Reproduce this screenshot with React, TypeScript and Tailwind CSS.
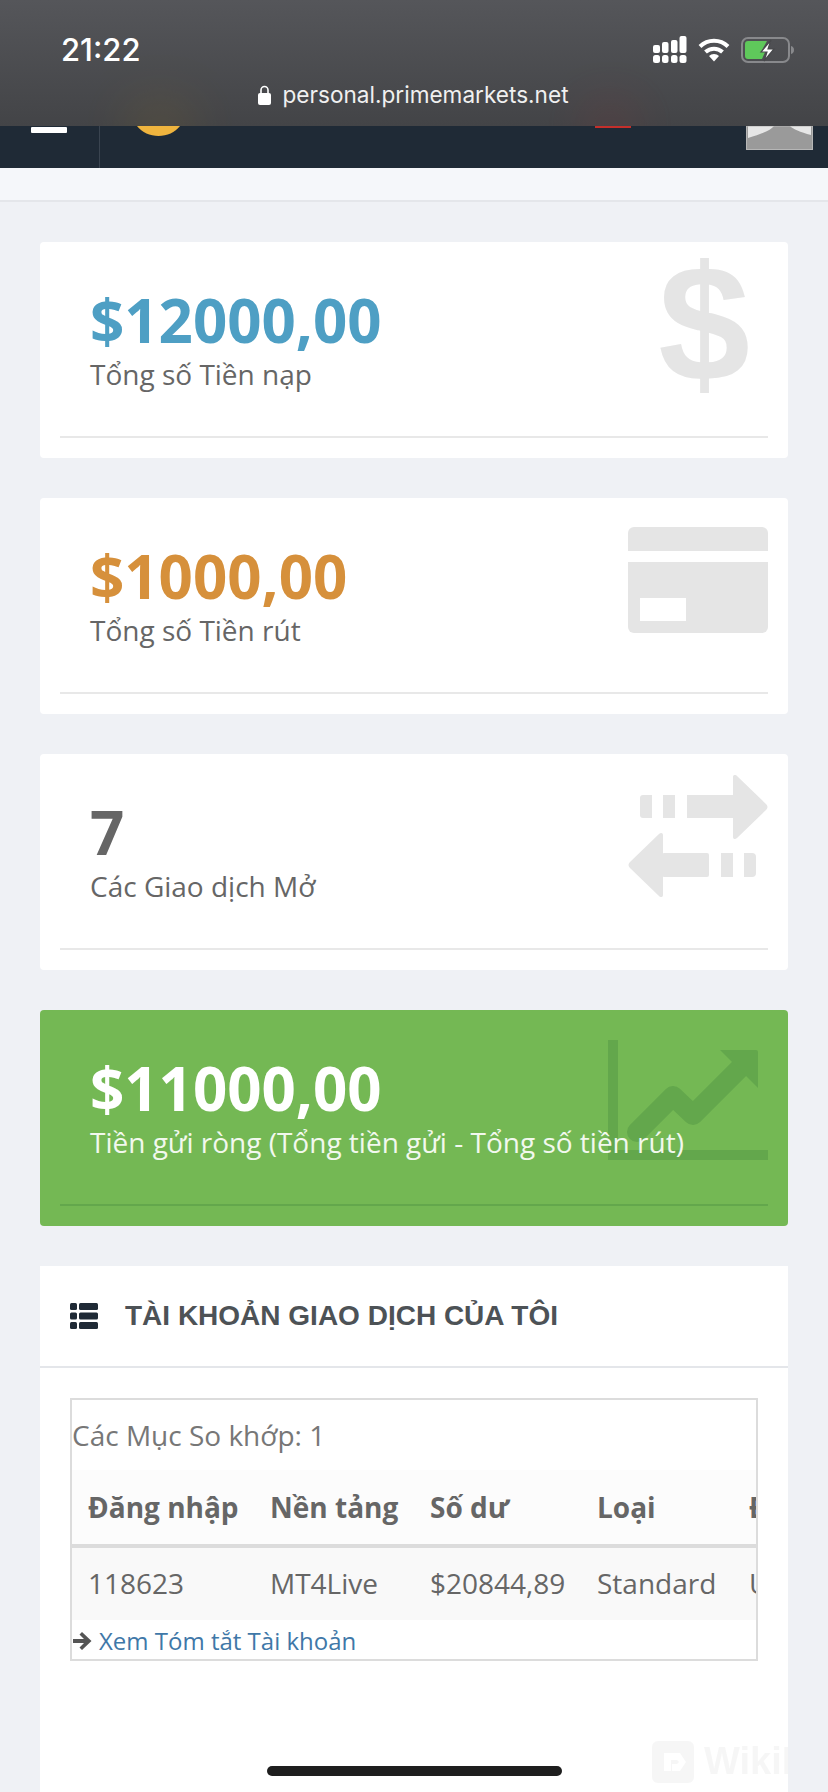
const OPEN_SANS = "font-['Open_Sans',sans-serif]";

function DollarIcon() {
  return (
    <span
      aria-hidden="true"
      className="absolute right-[38px] top-[-17px] font-['Liberation_Sans',sans-serif] text-[165px] font-bold leading-[1.2] text-[#e5e5e5]"
    >
      $
    </span>
  );
}

function CardIcon() {
  return (
    <svg className="absolute right-[20px] top-[29px]" width="140" height="106" viewBox="0 0 140 106" fill="#e5e5e5">
      <path d="M6 0h128a6 6 0 0 1 6 6v18H0V6a6 6 0 0 1 6-6z" />
      <path d="M0 35h140v65a6 6 0 0 1-6 6H6a6 6 0 0 1-6-6z" />
      <rect x="12" y="71" width="46" height="23" fill="#fff" />
    </svg>
  );
}

function ExchangeIcon() {
  return (
    <svg className="absolute right-[20px] top-[21px]" width="140" height="122" viewBox="0 0 140 122" fill="#e5e5e5">
      <path d="M15 20h9v23h-9a3 3 0 0 1-3-3V23a3 3 0 0 1 3-3z" />
      <rect x="35" y="20" width="12" height="23" />
      <rect x="59" y="20" width="47" height="23" />
      <path d="M105 2c0-2 2-3 4-1l29 28c2 2 2 4 0 6l-29 28c-2 2-4 1-4-1z" />
      <path d="M35 60c0-2-2-3-4-1L2 87c-2 2-2 4 0 6l29 28c2 2 4 1 4-1z" />
      <rect x="34" y="78" width="47" height="24" rx="2" />
      <rect x="93" y="78" width="12" height="24" />
      <path d="M116 78h8a4 4 0 0 1 4 4v16a4 4 0 0 1-4 4h-8z" />
    </svg>
  );
}

function ChartIcon() {
  return (
    <svg className="absolute right-[20px] top-[30px]" width="160" height="120" viewBox="0 0 160 120" fill="#63a74c">
      <rect x="0" y="0" width="10" height="120" />
      <rect x="0" y="110" width="160" height="10" />
      <path d="M29 92 65 56l20 19 50-50" fill="none" stroke="#63a74c" strokeWidth="20" strokeLinecap="round" strokeLinejoin="round" />
      <path d="M112 10h36a2 2 0 0 1 2 2v36z" />
    </svg>
  );
}

const STATS = [
  { value: "$12000,00", label: "Tổng số Tiền nạp", color: "text-[#4e9fc4]", icon: <DollarIcon /> },
  { value: "$1000,00", label: "Tổng số Tiền rút", color: "text-[#d6903b]", icon: <CardIcon /> },
  { value: "7", label: "Các Giao dịch Mở", color: "text-[#666666]", icon: <ExchangeIcon /> },
];

function StatCard({ value, label, color, icon }: { value: string; label: string; color: string; icon: React.ReactNode }) {
  return (
    <div className="relative h-[216px] rounded-[4px] bg-white px-5">
      {icon}
      <div className="relative h-[196px] border-b-2 border-[#e8e8e8] pl-[30px] pt-[41px]">
        <div className={`text-[60px] font-bold leading-[74px] ${color}`}>{value}</div>
        <div className="text-[28px] leading-[34px] text-[#666666]">{label}</div>
      </div>
    </div>
  );
}

function StatusBar() {
  return (
    <div className="relative h-[126px] overflow-hidden bg-gradient-to-b from-[#55565a] to-[#434447] text-white">
      <div className="absolute left-[125px] top-[100px] h-[50px] w-[70px] rounded-full bg-[#7a6330] opacity-30 blur-xl" />
      <div className="absolute left-[585px] top-[105px] h-[40px] w-[50px] rounded-full bg-[#8a3030] opacity-30 blur-xl" />
      <div className="relative flex items-center justify-between pl-[61px] pr-[33px] pt-[31px]">
        <span className="font-['Inter',sans-serif] text-[31px] font-medium leading-[38px]">21:22</span>
        <div className="flex items-center gap-[11px]">
          <svg width="34" height="28" viewBox="0 0 34 28" fill="#fff">
            <rect x="0" y="9" width="7" height="8" rx="2" />
            <rect x="9" y="6" width="6.500" height="11" rx="2" />
            <rect x="18" y="4" width="6.500" height="13" rx="2" />
            <rect x="26.500" y="0" width="7" height="17" rx="2" />
            <rect x="0" y="19" width="7" height="8" rx="2.500" />
            <rect x="9" y="19" width="6.500" height="8" rx="2.500" />
            <rect x="18" y="19" width="6.500" height="8" rx="2.500" />
            <rect x="26.500" y="19" width="7" height="8" rx="2.500" />
          </svg>
          <svg width="32" height="24" viewBox="0 0 32 24" fill="none" stroke="#fff" strokeWidth="4">
            <path d="M2 8.500a20 20 0 0 1 28 0" />
            <path d="M7.500 14a12.500 12.500 0 0 1 17 0" />
            <path d="M16 23.500l-5-5.500a7 7 0 0 1 10 0z" fill="#fff" stroke="none" />
          </svg>
          <svg width="54" height="26" viewBox="0 0 54 26">
            <rect x="1" y="1" width="47" height="24" rx="6" fill="none" stroke="#88898c" strokeWidth="2" />
            <path d="M7 4h19l-5 9h4l-4 9H7a3 3 0 0 1-3-3V7a3 3 0 0 1 3-3z" fill="#5fc85b" />
            <path d="M50 9c2 .500 3 2 3 4s-1 3.500-3 4z" fill="#88898c" />
            <path d="M30 3 20 15h6l-3 9 10-12h-6z" fill="#fff" stroke="#47484b" strokeWidth="1.200" />
          </svg>
        </div>
      </div>
      <div className="relative mt-[12px] flex items-center justify-center gap-[11px] pr-[1px]">
        <svg width="13" height="20" viewBox="0 0 13 20" fill="#fff">
          <rect x="0" y="8" width="13" height="12" rx="2" />
          <path d="M3 9V5a3.500 3.500 0 0 1 7 0v4" fill="none" stroke="#fff" strokeWidth="1.600" />
        </svg>
        <span className="font-['Inter',sans-serif] text-[22.6px] leading-[28px] text-[#f0f0f0]">personal.primemarkets.net</span>
      </div>
    </div>
  );
}

function NavBar() {
  return (
    <div className="relative flex h-[42px] bg-[#1f2a36]">
      <div className="ml-[31px] mt-px h-[6px] w-[36px] rounded-[1px] bg-white" />
      <div className="ml-[32px] h-full w-px bg-[#3a4450]" />
      <svg className="ml-[37px]" width="43" height="10" viewBox="0 0 43 10">
        <path d="M0 0h43C38 6.500 30 10 21.500 10S5 6.500 0 0z" fill="#efb43e" />
      </svg>
      <div className="ml-[415px] h-[2px] w-[36px] bg-[#c52f2b]" />
      <svg className="ml-[115px]" width="67" height="24" viewBox="0 0 67 24">
        <rect width="67" height="24" fill="#9a9a9a" />
        <path d="M2 0h26c-3 4-12 8-26 12zM65 0H44c3 3 10 6 21 9z" fill="#e6e6e6" />
        <rect x="0.500" y="0" width="66" height="23.500" fill="none" stroke="#b6b6b6" />
      </svg>
    </div>
  );
}

const HEADERS = ["Đăng nhập", "Nền tảng", "Số dư", "Loại", "Đơn vị"];
const ROW = ["118623", "MT4Live", "$20844,89", "Standard", "USD"];
const COL_WIDTHS = ["w-[182px]", "w-[160px]", "w-[167px]", "w-[152px]", "w-[120px]"];

export default function App() {
  return (
    <div className={`relative h-[1792px] w-[828px] overflow-hidden bg-[#eff1f5] ${OPEN_SANS}`}>
      <StatusBar />
      <NavBar />
      <div className="h-[34px] border-b-2 border-[#e4e6ea] bg-[#f5f7fa]" />

      <div className="flex flex-col gap-[40px] px-[40px] pt-[40px]">
        {STATS.map((s) => (
          <StatCard key={s.label} {...s} />
        ))}

        <div className="relative h-[216px] rounded-[4px] bg-[#74b854] px-5">
          <ChartIcon />
          <div className="relative h-[196px] border-b-2 border-[#63a74c] pl-[30px] pt-[41px] text-white">
            <div className="text-[60px] font-bold leading-[74px]">$11000,00</div>
            <div className="text-[28px] leading-[34px] text-[#f2f8ee]">Tiền gửi ròng (Tổng tiền gửi - Tổng số tiền rút)</div>
          </div>
        </div>

        <div className="h-[600px] bg-white">
          <div className="flex h-[102px] items-center gap-[27px] border-b-2 border-[#e4e6ea] pl-[30px]">
            <svg width="28" height="26" viewBox="0 0 28 26" fill="#1f2a36">
              <rect x="0" y="0" width="7" height="7" rx="1.500" />
              <rect x="9" y="0" width="19" height="7" rx="1.500" />
              <rect x="0" y="9.500" width="7" height="7" rx="1.500" />
              <rect x="9" y="9.500" width="19" height="7" rx="1.500" />
              <rect x="0" y="19" width="7" height="7" rx="1.500" />
              <rect x="9" y="19" width="19" height="7" rx="1.500" />
            </svg>
            <h2 className="font-['Liberation_Sans',sans-serif] text-[28px] font-bold leading-none text-[#4d5256]">
              TÀI KHOẢN GIAO DỊCH CỦA TÔI
            </h2>
          </div>

          <div className="ml-[30px] mt-[30px] h-[263px] w-[688px] overflow-hidden border-2 border-[#dcdcdc]">
            <div className="pt-[16px] text-[28px] leading-[38px] text-[#777777]">Các Mục So khớp: 1</div>
            <div className="w-[800px]">
              <div className="mt-[16px] flex h-[78px] items-center border-b-4 border-[#dcdcdc] bg-[#fcfcfc] pl-[16px] text-[28px] font-bold text-[#666666]">
                {HEADERS.map((h, i) => (
                  <div key={h} className={`${COL_WIDTHS[i]} shrink-0`}>{h}</div>
                ))}
              </div>
              <div className="flex h-[72px] items-center bg-[#f9f9f9] pb-[2px] pl-[16px] text-[28px] text-[#666666]">
                {ROW.map((c, i) => (
                  <div key={c} className={`${COL_WIDTHS[i]} shrink-0`}>{c}</div>
                ))}
              </div>
            </div>
            <div className="flex h-[39px] items-center gap-[6px] pl-px pt-[2px] text-[24px] text-[#3f78a8]">
              <svg width="20" height="20" viewBox="0 0 20 20" fill="#555">
                <path d="M0 8h11L6.500 3.500 9 1l9.500 9L9 19l-2.500-2.500L11 12H0z" />
              </svg>
              Xem Tóm tắt Tài khoản
            </div>
          </div>
        </div>
      </div>

      {/* WikiFX watermark */}
      <div className="absolute left-[652px] top-[1733px] flex w-[136px] items-center gap-[10px] overflow-hidden opacity-[0.04]">
        <svg className="shrink-0" width="42" height="42" viewBox="0 0 42 42">
          <rect width="42" height="42" rx="6" fill="#333" />
          <path d="M12 12h16l6 9-6 9H20v-7h5l2-2-2-2h-6v11h-7z" fill="#fff" />
        </svg>
        <span className="font-['Liberation_Sans',sans-serif] text-[38px] font-bold text-[#333]">WikiFX</span>
      </div>

      {/* home indicator */}
      <div className="absolute left-[267px] top-[1766px] h-[10px] w-[295px] rounded-full bg-[#1e1e1e]" />
    </div>
  );
}
